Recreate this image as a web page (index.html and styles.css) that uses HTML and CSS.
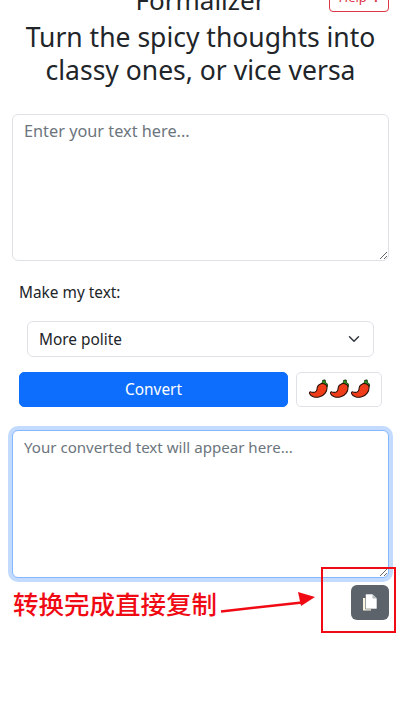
FILE: index.html
```html
<!DOCTYPE html>
<html lang="en">
<head>
    <meta charset="UTF-8">
    <meta name="viewport" content="width=device-width, initial-scale=1.0">
    <title>Formalizer</title>
    <link rel="stylesheet" href="styles.css">
</head>
<body>
    <svg width="0" height="0" class="defs">
        <symbol id="chili" viewBox="0 0 20 20">
            <path d="M12.500 5c1.300-.5 1.900-1.700 1.900-3.600l2.600-.4.200 2.500c1.500.8 2.500 2.100 2.500 3.900l-1.500 1.500z" fill="#2f9a22" stroke="#14300e" stroke-width="1"/>
            <path d="M11.500 5.500c2.300-1.500 6.400-.6 7.300 2.300.9 4.500-2.300 10-8.300 11.200-4 .8-8.600-.4-10-3.700-.4-1.200.5-2.200 1.700-1.700 2.600.9 4.400.5 5.500-1 1-1.300.7-3 1.200-4.400.4-1.200 1.300-2 2.600-2.700z" fill="#ee3d18" stroke="#2a0f08" stroke-width="1.100"/>
        </symbol>
    </svg>

    <div class="page">
        <header class="top-bar">
            <h1 class="app-name">Formalizer</h1>
            <button class="help-btn">Help <span class="help-dot">?</span></button>
        </header>
        <h2 class="tagline">Turn the spicy thoughts into classy ones, or vice versa</h2>

        <textarea class="text-box" placeholder="Enter your text here..."></textarea>

        <div class="controls">
            <label class="make-label" for="tone">Make my text:</label>
            <div class="select-wrap">
                <select id="tone" class="tone-select">
                    <option>More polite</option>
                </select>
            </div>
            <div class="action-row">
                <button class="convert-btn">Convert</button>
                <button class="spice-btn">
                    <svg class="chili"><use href="#chili"/></svg>
                    <svg class="chili"><use href="#chili"/></svg>
                    <svg class="chili"><use href="#chili"/></svg>
                </button>
            </div>
        </div>

        <textarea class="text-box text-box-focus" placeholder="Your converted text will appear here..."></textarea>

        <div class="copy-row">
            <button class="copy-btn" aria-label="Copy">
                <svg width="16" height="19" viewBox="0 0 16 19">
                    <path d="M1 5h8v12.500h-8z" fill="#f8f3de"/>
                    <path d="M3.500 1h7l4.500 4.500v10.500h-11.500z" fill="#fff" stroke="#5c636a" stroke-width=".6"/>
                    <path d="M10.500 1.500v4h4z" fill="#b4b8bd"/>
                </svg>
            </button>
        </div>
    </div>

    <!-- red markup drawn on top of the screenshot -->
    <div class="note-box"></div>
    <div class="note-text">转换完成直接复制</div>
    <svg class="note-arrow" width="400" height="711" viewBox="0 0 400 711">
        <path d="M221 611.500L302 602.500" stroke="#f00a14" stroke-width="2.500" fill="none"/>
        <path d="M298 592L315 597 301 606z" fill="#f00a14"/>
    </svg>
</body>
</html>
```

FILE: styles.css
```css
html, body {
    margin: 0;
    height: 711px;
    overflow: hidden;
    background-color: #fff;
}

body {
    position: relative;
    font-family: "Noto Sans", "Open Sans", sans-serif;
    color: #212529;
}

.defs {
    position: absolute;
}

.page {
    padding: 0 11px 0 12px;
    margin-top: -27px;
}

.top-bar {
    display: grid;
    grid-template-columns: 1fr auto 1fr;
    align-items: end;
    height: 39px;
}

.app-name {
    grid-column: 2;
    margin: 0 0 -7px;
    font-size: 26px;
    font-weight: 400;
    line-height: 37px;
}

.help-btn {
    grid-column: 3;
    justify-self: end;
    width: 60px;
    height: 30px;
    padding: 0;
    font-family: inherit;
    font-size: 13px;
    color: #dc3545;
    background: #fff;
    border: 1px solid #dc3545;
    border-radius: 4px;
}

.help-dot {
    font-weight: 700;
    margin-left: 3px;
}

.tagline {
    margin: 9px 0 0;
    font-size: 26.500px;
    font-weight: 400;
    line-height: 33px;
    text-align: center;
}

.text-box {
    display: block;
    box-sizing: border-box;
    width: 100%;
    height: 147px;
    margin-top: 27px;
    padding: 4px 11px;
    font-family: inherit;
    font-size: 16.300px;
    line-height: 24px;
    background: #fff;
    border: 1px solid #dee2e6;
    border-radius: 6px;
    outline: none;
}

.text-box::placeholder {
    color: #6c757d;
    opacity: 1;
}

.text-box-focus {
    height: 148px;
    margin-top: 23px;
    font-size: 15.100px;
    border-color: #86b7fe;
    box-shadow: 0 0 0 4px #c2dbfe;
}

.controls {
    padding: 0 7px;
}

.make-label {
    display: block;
    margin-top: 20px;
    font-size: 15.400px;
    line-height: 24px;
}

.select-wrap {
    padding: 0 8px;
    margin-top: 16px;
}

.tone-select {
    display: block;
    box-sizing: border-box;
    width: 100%;
    height: 36px;
    padding: 0 11px;
    font-family: inherit;
    font-size: 15.400px;
    color: #212529;
    background: #fff url("data:image/svg+xml,%3csvg xmlns='http://www.w3.org/2000/svg' viewBox='0 0 16 16'%3e%3cpath fill='none' stroke='%23343a40' stroke-linecap='round' stroke-linejoin='round' stroke-width='2' d='m2 5 6 6 6-6'/%3e%3c/svg%3e") no-repeat right 12px center / 14px 12px;
    border: 1px solid #dee2e6;
    border-radius: 6px;
    appearance: none;
}

.action-row {
    display: flex;
    gap: 8px;
    margin-top: 15px;
}

.convert-btn {
    width: 269px;
    height: 35px;
    padding: 0;
    font-family: inherit;
    font-size: 15.400px;
    color: #fff;
    background-color: #0d6efd;
    border: 1px solid #0d6efd;
    border-radius: 5px;
}

.spice-btn {
    display: flex;
    align-items: center;
    justify-content: center;
    gap: 2px;
    width: 86px;
    height: 35px;
    padding: 0 0 2px;
    background: #fff;
    border: 1px solid #dee2e6;
    border-radius: 5px;
}

.chili {
    width: 19px;
    height: 19px;
}

.copy-row {
    display: flex;
    justify-content: flex-end;
    margin-top: 7px;
}

.copy-btn {
    display: flex;
    align-items: center;
    justify-content: center;
    width: 38px;
    height: 35px;
    padding: 0;
    background-color: #5c636a;
    border: none;
    border-radius: 6px;
}

.note-box {
    position: absolute;
    left: 321px;
    top: 567px;
    width: 75px;
    height: 66px;
    box-sizing: border-box;
    border: 2.500px solid #f00a14;
}

.note-text {
    position: absolute;
    left: 13px;
    top: 586px;
    font-family: "Noto Sans CJK SC", sans-serif;
    font-size: 25.500px;
    font-weight: 500;
    line-height: 34px;
    color: #f00a14;
    white-space: nowrap;
}

.note-arrow {
    position: absolute;
    left: 0;
    top: 0;
    pointer-events: none;
}
```
